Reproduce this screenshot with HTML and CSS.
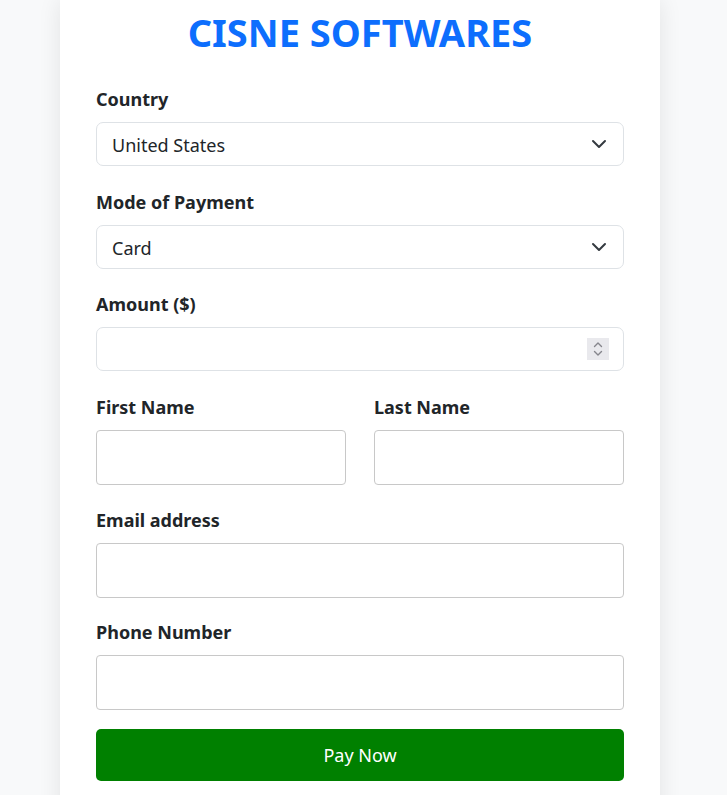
FILE: index.html
```html
<!DOCTYPE html>
<html lang="en">
<head>
<meta charset="utf-8">
<title>Cisne Softwares</title>
<link rel="stylesheet" href="styles.css">
</head>
<body>
<div class="card">
  <h1 class="title">CISNE SOFTWARES</h1>
  <form class="form">
    <div class="group">
      <label class="label" for="country">Country</label>
      <div class="select-wrap">
        <select id="country" class="select">
          <option>United States</option>
        </select>
        <svg class="chev" width="16" height="16" viewBox="0 0 16 16"><path d="M2 5l6 6 6-6" fill="none" stroke="#343a40" stroke-width="2" stroke-linecap="round" stroke-linejoin="round"/></svg>
      </div>
    </div>
    <div class="group">
      <label class="label" for="mode">Mode of Payment</label>
      <div class="select-wrap">
        <select id="mode" class="select">
          <option>Card</option>
        </select>
        <svg class="chev" width="16" height="16" viewBox="0 0 16 16"><path d="M2 5l6 6 6-6" fill="none" stroke="#343a40" stroke-width="2" stroke-linecap="round" stroke-linejoin="round"/></svg>
      </div>
    </div>
    <div class="group">
      <label class="label" for="amount">Amount ($)</label>
      <div class="select-wrap">
        <input id="amount" class="select number" type="number">
        <span class="spin">
          <svg width="10" height="18" viewBox="0 0 10 18"><path d="M1.5 6.5L5 3l3.5 3.5M1.5 11.5L5 15l3.5-3.5" fill="none" stroke="#85858c" stroke-width="1.4" stroke-linecap="round" stroke-linejoin="round"/></svg>
        </span>
      </div>
    </div>
    <div class="row">
      <div class="group">
        <label class="label" for="first">First Name</label>
        <input id="first" class="field" type="text">
      </div>
      <div class="group">
        <label class="label" for="last">Last Name</label>
        <input id="last" class="field" type="text">
      </div>
    </div>
    <div class="group group-tight">
      <label class="label" for="email">Email address</label>
      <input id="email" class="field" type="email">
    </div>
    <div class="group">
      <label class="label" for="phone">Phone Number</label>
      <input id="phone" class="field" type="tel">
    </div>
    <button type="button" class="pay">Pay Now</button>
  </form>
</div>
</body>
</html>
```

FILE: styles.css
```css
html, body {
  margin: 0;
  padding: 0;
}
body {
  background: #f8f9fa;
  font-family: "Noto Sans", "Open Sans", sans-serif;
  color: #212529;
  height: 795px;
  overflow: hidden;
}
.card {
  width: 600px;
  margin-left: 60px;
  background: #fff;
  box-shadow: 0 0 22px rgba(0, 0, 0, 0.09);
  padding: 10px 36px 30px;
  box-sizing: border-box;
  min-height: 900px;
}
.title {
  margin: 0 0 33px;
  text-align: center;
  color: #0d6efd;
  font-size: 38px;
  font-weight: 700;
  line-height: 44px;
}
.form {
  display: flex;
  flex-direction: column;
}
.group {
  display: flex;
  flex-direction: column;
  margin-bottom: 23.5px;
}
.group-tight {
  margin-bottom: 21.5px;
}
.label {
  font-weight: 700;
  font-size: 18px;
  line-height: 24px;
  margin-bottom: 11px;
}
.select-wrap {
  position: relative;
}
.select {
  appearance: none;
  -webkit-appearance: none;
  width: 100%;
  height: 44px;
  box-sizing: border-box;
  border: 1px solid #dee2e6;
  border-radius: 7px;
  background: #fff;
  padding: 2px 40px 0 15px;
  font-family: inherit;
  font-size: 18px;
  color: #212529;
  outline: none;
}
.number::-webkit-inner-spin-button,
.number::-webkit-outer-spin-button {
  -webkit-appearance: none;
  margin: 0;
}
.chev {
  position: absolute;
  right: 17px;
  top: 14px;
  pointer-events: none;
}
.spin {
  position: absolute;
  right: 15px;
  top: 11px;
  width: 22px;
  height: 22px;
  background: #e9e9ed;
  display: flex;
  align-items: center;
  justify-content: center;
}
.row {
  display: grid;
  grid-template-columns: 1fr 1fr;
  column-gap: 28px;
}
.field {
  width: 100%;
  height: 55px;
  box-sizing: border-box;
  border: 1px solid #c8c8c8;
  border-radius: 4px;
  padding: 0 12px;
  font-family: inherit;
  font-size: 18px;
  outline: none;
}
.pay {
  height: 52px;
  margin-top: -4.5px;
  border: none;
  border-radius: 5px;
  background: #008000;
  color: #fff;
  font-family: inherit;
  font-size: 18px;
  cursor: pointer;
}
```
